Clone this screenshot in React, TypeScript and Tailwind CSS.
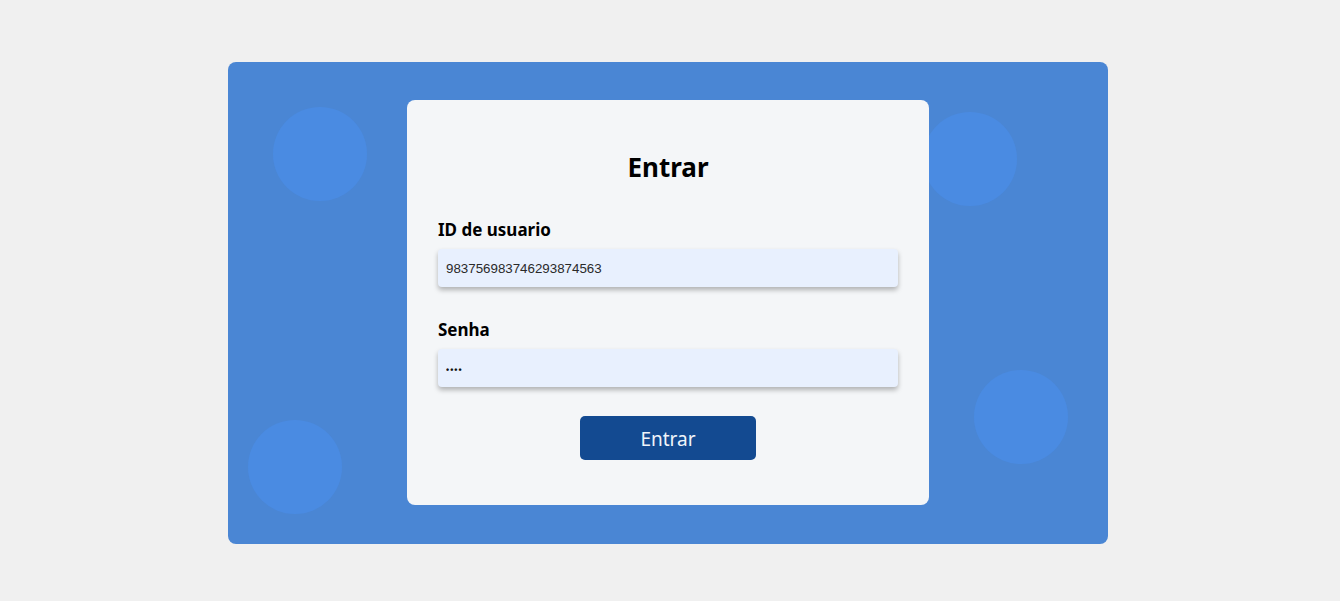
import { useState } from 'react';

// decorative bubbles on the blue panel
const bubbles = [
  { cls: 'left-[45px] top-[45px]' },
  { cls: 'left-[695px] top-[50px]' },
  { cls: 'left-[20px] top-[358px]' },
  { cls: 'left-[746px] top-[308px]' },
];

export default function App() {
  const [userId, setUserId] = useState('983756983746293874563');
  const [password, setPassword] = useState('1234');

  return (
    <div className="min-h-screen w-full bg-[#f0f0f0] pt-[62px] font-['Noto_Sans','Open_Sans',sans-serif]">
      <div className="relative ml-[228px] flex h-[482px] w-[880px] items-start justify-center overflow-hidden rounded-[8px] bg-[#4a86d4]">
        {bubbles.map((b, i) => (
          <div key={i} className={`absolute h-[94px] w-[94px] rounded-full bg-[#4a8be2] ${b.cls}`} />
        ))}

        <form
          onSubmit={(e) => e.preventDefault()}
          className="relative z-10 mt-[38px] flex h-[405px] w-[522px] flex-col rounded-[8px] bg-[#f4f6f8] px-[31px] pt-[52px]"
        >
          <h2 className="text-center text-[26px] font-bold leading-[31px] text-black">Entrar</h2>

          <label className="mt-[35px] text-[17px] font-bold leading-[24px] text-black">ID de usuario</label>
          <input
            type="text"
            value={userId}
            onChange={(e) => setUserId(e.target.value)}
            className="mt-[7px] h-[38px] w-[460px] rounded-[4px] bg-[#e8f0fe] px-[8px] font-['Liberation_Sans',Arial,sans-serif] text-[13.33px] text-[#2a2a2a] shadow-[0_3px_5px_rgba(0,0,0,0.28)] outline-none"
          />

          <label className="mt-[31px] text-[17px] font-bold leading-[24px] text-black">Senha</label>
          <input
            type="password"
            value={password}
            onChange={(e) => setPassword(e.target.value)}
            className="mt-[7px] h-[38px] w-[460px] rounded-[4px] bg-[#e8f0fe] px-[8px] pt-[4px] font-['Liberation_Sans',Arial,sans-serif] text-[9px] font-bold tracking-[1px] text-[#111] shadow-[0_3px_5px_rgba(0,0,0,0.28)] outline-none"
          />

          <button
            type="submit"
            className="mx-auto mt-[29px] h-[44px] w-[176px] rounded-[5px] bg-[#134a91] pt-[2px] text-[19px] leading-none text-[#f0f4fa]"
          >
            Entrar
          </button>
        </form>
      </div>
    </div>
  );
}
